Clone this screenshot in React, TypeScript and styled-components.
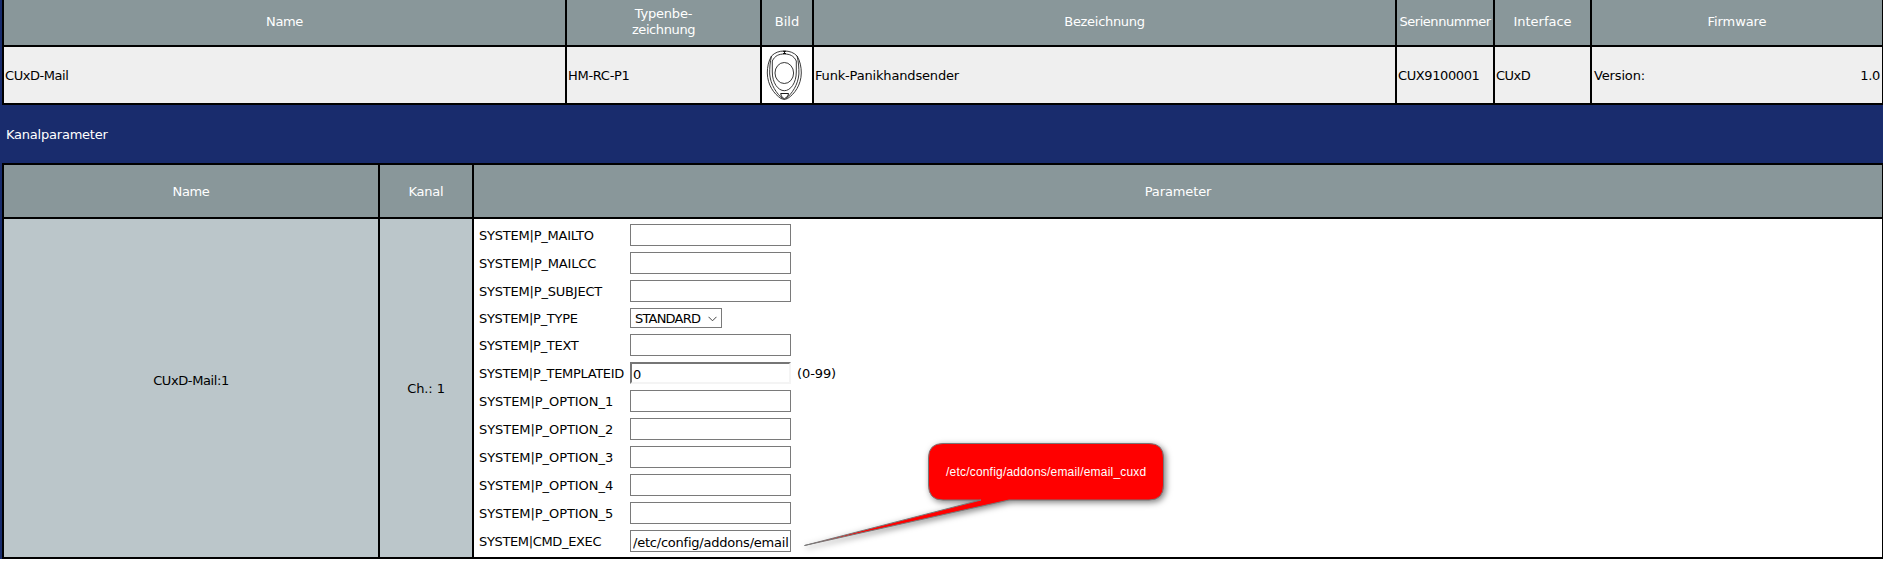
import React from "react";
import styled, { createGlobalStyle } from "styled-components";

const Global = createGlobalStyle`
  * { box-sizing: border-box; }
  body { margin: 0; background: #fff; font-family: Verdana, "DejaVu Sans", sans-serif; font-size: 13px; line-height: 16px; color: #000; overflow: hidden; }
`;

const Page = styled.main`
  position: relative;
  width: 1883px;
  height: 559px;
  padding-left: 2px;
  background: #192c6d;
`;

const Grid = styled.section<{ $cols: string; $rows: string; $top?: boolean }>`
  display: grid;
  grid-template-columns: ${(p) => p.$cols};
  grid-template-rows: ${(p) => p.$rows};
  gap: 2px;
  padding: ${(p) => (p.$top ? "2px" : "0")} 1px 2px 2px;
  background: #000;
`;

const Text = styled.span<{ $track?: number }>`
  letter-spacing: ${(p) => p.$track ?? 0}px;
  white-space: nowrap;
`;

const Head = styled.div<{ $low?: boolean }>`
  display: flex;
  flex-direction: column;
  align-items: center;
  justify-content: center;
  padding: ${(p) => (p.$low ? "1px 0 0" : "0 0 2px")};
  color: #fff;
  background: #89979a;
`;

const Cell = styled.div<{ $pad?: number }>`
  display: flex;
  align-items: center;
  justify-content: space-between;
  padding: 2px ${(p) => p.$pad ?? 1}px 0;
  background: #efefef;
`;

const Picture = styled.div`
  background: #fff;
  svg { display: block; }
`;

const Channel = styled.div<{ $shift: number }>`
  display: flex;
  justify-content: center;
  padding-top: ${(p) => p.$shift}px;
  background: #bbc6ca;
`;

const Caption = styled.h2`
  height: 58px;
  margin: 0;
  padding: 22px 0 0 4px;
  font-size: 13px;
  font-weight: 400;
  color: #fff;
`;

const Params = styled.div`
  display: flex;
  flex-direction: column;
  gap: 6px;
  padding: 5px 5px 0;
  background: #fff;
`;

const Row = styled.label`
  display: flex;
  align-items: center;
`;

const Label = styled(Text)`
  width: 151px;
  padding-top: 2px;
`;

const Input = styled.input<{ $inset?: boolean }>`
  width: 161px;
  height: 22px;
  padding: 2px 1px 0 2px;
  font: inherit;
  letter-spacing: -0.22px;
  background: #fff;
  outline: none;
  border: 1px solid #7a7a7a;
  ${(p) => p.$inset && "border-width: 2px; border-color: #767676 #f4f4f4 #f4f4f4 #767676; padding: 2px 1px 0;"}
`;

const Select = styled.span`
  display: flex;
  align-items: center;
  justify-content: space-between;
  width: 92px;
  height: 20px;
  padding: 1px 4px 0;
  border: 1px solid #7a7a7a;
`;

const Hint = styled(Text)`
  margin-left: 6px;
  padding-top: 2px;
`;

const Callout = styled.div`
  position: absolute;
  left: 790px;
  top: 430px;
  width: 400px;
  height: 129px;
  font: 12px/14px "Liberation Sans", Arial, sans-serif;
  color: #fff;
`;

const Bubble = styled.svg`
  display: block;
  overflow: visible;
  path { filter: drop-shadow(2px 2px 3px rgba(0, 0, 0, 0.5)); }
`;

const CalloutText = styled(Text)`
  position: absolute;
  left: 156px;
  top: 35px;
`;

const Remote = () => (
  <svg width="50" height="56" viewBox="0 0 50 56" fill="none" stroke="#222" strokeWidth="0.9">
    <path d="M22.300 4C17 4 13 5.500 9.500 9C6.500 14 5.300 20 5.300 26C5.500 38 12 47 19 51.500Q22.300 53.500 25.600 51.500C32.600 47 39.100 38 39.300 26C39.300 20 38.100 14 35.100 9C31.600 5.500 27.600 4 22.300 4Z" />
    <path d="M9.500 9C8 15 7.600 21 7.700 27C8.500 38 15 47 20.500 51.500M35.100 9C36.600 15 37 21 36.900 27C36.100 38 29.600 47 24.100 51.500" />
    <path d="M10.300 14C13 8.500 17 7 22.300 7S31.600 8.500 34.300 14V25C34.300 36 28.500 43.700 22.300 43.700S10.300 36 10.300 25Z" />
    <ellipse cx="22.300" cy="26" rx="9.300" ry="10.500" />
    <path d="M21 4.300h3M21 6.500h3M22.500 4v3M18.700 46.500h7.800l-.6 2.500-3.600 3-3-3z" stroke="#000" />
  </svg>
);

type Field = { name: string; track: number; kind?: "select" | "inset"; value?: string; hint?: string };

const fields: Field[] = [
  { name: "P_MAILTO", track: -0.22 },
  { name: "P_MAILCC", track: -0.19 },
  { name: "P_SUBJECT", track: -0.2 },
  { name: "P_TYPE", track: -0.3, kind: "select", value: "STANDARD" },
  { name: "P_TEXT", track: -0.3 },
  { name: "P_TEMPLATEID", track: -0.33, kind: "inset", value: "0", hint: "(0-99)" },
  { name: "P_OPTION_1", track: -0.06 },
  { name: "P_OPTION_2", track: -0.06 },
  { name: "P_OPTION_3", track: -0.06 },
  { name: "P_OPTION_4", track: -0.06 },
  { name: "P_OPTION_5", track: -0.06 },
  { name: "CMD_EXEC", track: -0.35, value: "/etc/config/addons/email" },
];

export default function App() {
  return (
    <Page>
      <Global />
      <Grid $cols="561px 193px 50px 581px 96px 95px 290px" $rows="45px 56px">
        <Head><Text $track={-0.4}>Name</Text></Head>
        <Head>
          <Text $track={-0.2}>Typenbe-</Text>
          <Text $track={-0.4}>zeichnung</Text>
        </Head>
        <Head><Text>Bild</Text></Head>
        <Head><Text $track={-0.3}>Bezeichnung</Text></Head>
        <Head><Text $track={-0.45}>Seriennummer</Text></Head>
        <Head><Text>Interface</Text></Head>
        <Head><Text $track={-0.1}>Firmware</Text></Head>
        <Cell><Text $track={-0.45}>CUxD-Mail</Text></Cell>
        <Cell><Text $track={-0.3}>HM-RC-P1</Text></Cell>
        <Picture><Remote /></Picture>
        <Cell><Text $track={-0.17}>Funk-Panikhandsender</Text></Cell>
        <Cell><Text $track={-0.4}>CUX9100001</Text></Cell>
        <Cell><Text $track={-0.5}>CUxD</Text></Cell>
        <Cell $pad={2}>
          <Text $track={-0.15}>Version:</Text>
          <Text $track={-0.3}>1.0</Text>
        </Cell>
      </Grid>
      <Caption><Text $track={-0.22}>Kanalparameter</Text></Caption>
      <Grid $cols="374px 92px 1408px" $rows="52px 338px" $top>
        <Head $low><Text $track={-0.4}>Name</Text></Head>
        <Head $low><Text $track={-0.2}>Kanal</Text></Head>
        <Head $low><Text $track={-0.1}>Parameter</Text></Head>
        <Channel $shift={154}><Text $track={-0.4}>CUxD-Mail:1</Text></Channel>
        <Channel $shift={162}><Text $track={-0.1}>Ch.: 1</Text></Channel>
        <Params>
          {fields.map((f) => (
            <Row key={f.name}>
              <Label $track={f.track}>SYSTEM|{f.name}</Label>
              {f.kind === "select" ? (
                <Select>
                  <Text $track={-0.8}>{f.value}</Text>
                  <svg width="9" height="6" viewBox="0 0 9 6" fill="none" stroke="#444"><path d="M.5 .8l4 4 4-4" /></svg>
                </Select>
              ) : (
                <Input $inset={f.kind === "inset"} defaultValue={f.value ?? ""} />
              )}
              {f.hint && <Hint $track={-0.1}>{f.hint}</Hint>}
            </Row>
          ))}
        </Params>
      </Grid>
      <Callout>
        <Bubble width="400" height="129">
          <path
            d="M153 13.500H359Q373.500 13.500 373.500 28V55Q373.500 70 359 70H219L14.500 115.500L191 70H153Q138.500 70 138.500 55V28Q138.500 13.500 153 13.500Z"
            fill="#f00" stroke="#777"
          />
        </Bubble>
        <CalloutText $track={0.2}>/etc/config/addons/email/email_cuxd</CalloutText>
      </Callout>
    </Page>
  );
}
